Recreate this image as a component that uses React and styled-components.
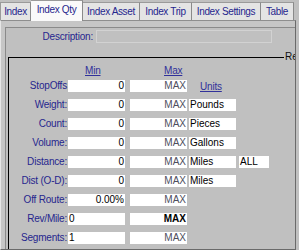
import React from "react";
import styled, { createGlobalStyle } from "styled-components";

const GlobalStyle = createGlobalStyle`
  html, body { margin: 0; padding: 0; background: #c0c0c0; }
  body { font-family: "Liberation Sans", Arial, sans-serif; }
  * { box-sizing: border-box; }
`;

const NAVY = "#26268e";

const Screen = styled.div`
  width: 299px;
  height: 250px;
  overflow: hidden;
  background: #c0c0c0;
  display: flex;
  flex-direction: column;
`;

const TabStrip = styled.div`
  display: flex;
  align-items: flex-end;
  height: 20px;
  flex: none;
`;

const Tab = styled.div`
  width: ${(p) => p.$w}px;
  height: ${(p) => (p.$active ? 21 : 18)}px;
  margin-bottom: ${(p) => (p.$active ? -1 : 0)}px;
  position: relative;
  z-index: ${(p) => (p.$active ? 2 : 1)};
  background: ${(p) => (p.$active ? "#fafafa" : "#e4e4e4")};
  border-top: 1px solid #9a9a9a;
  border-right: 1px solid #8a8a8a;
  border-left: ${(p) => (p.$first ? "1px solid #9a9a9a" : "none")};
  color: ${NAVY};
  font-size: 10px;
  letter-spacing: -0.35px;
  line-height: ${(p) => (p.$active ? 17 : 17)}px;
  text-align: center;
  white-space: nowrap;
`;

const TabPanel = styled.div`
  flex: 1;
  width: 296px;
  display: flex;
  flex-direction: column;
  background: #c6c6c6;
  border-top: 1px solid #8e8e8e;
  border-left: 1px solid #e6e6e6;
  border-right: 1px solid #6a6a6a;
  border-bottom: 1px solid #6a6a6a;
  padding: 6px 0 0 4px;
  min-height: 0;
`;

const Frame = styled.div`
  flex: 1;
  display: flex;
  flex-direction: column;
  background: #c0c0c0;
  border-top: 1px solid #8a8a8a;
  border-left: 1px solid #8a8a8a;
  min-height: 0;
  overflow: hidden;
`;

const DescRow = styled.div`
  display: flex;
  align-items: center;
  height: 13px;
  margin-top: 2px;
  gap: 3px;
`;

const DescLabel = styled.div`
  width: 87px;
  text-align: right;
  color: ${NAVY};
  font-size: 10px;
  letter-spacing: -0.2px;
  line-height: 13px;
`;

const DescField = styled.div`
  width: 176px;
  height: 13px;
  border: 1px solid #d2d2d2;
  background: #c0c0c0;
`;

const GroupRow = styled.div`
  flex: 1;
  display: flex;
  align-items: flex-start;
  margin: 14px 0 0 2px;
  min-height: 0;
`;

const GroupBox = styled.div`
  flex: none;
  width: 276px;
  align-self: stretch;
  border-top: 1px solid #000;
  border-left: 1px solid #000;
  display: flex;
  flex-direction: column;
`;

const Legend = styled.div`
  margin-top: -6px;
  padding-left: 1px;
  font-size: 10px;
  line-height: 12px;
  color: #111;
  white-space: nowrap;
`;

const Grid = styled.div`
  display: grid;
  grid-template-columns: 59px 62px 59px 50px 30px;
  grid-auto-rows: 12px;
  row-gap: 7px;
  align-items: center;
`;

const HeaderGrid = styled(Grid)`
  grid-auto-rows: 11px;
  margin: 7px 0 4px 0;
`;

const Header = styled.div`
  grid-column: ${(p) => p.$col};
  padding-left: ${(p) => p.$pad}px;
  color: #30309a;
  font-size: 10px;
  letter-spacing: -0.2px;
  line-height: 11px;
  text-decoration: underline;
  white-space: nowrap;
`;

const Label = styled.div`
  grid-column: 1;
  text-align: right;
  padding-right: 1px;
  color: ${NAVY};
  font-size: 10px;
  letter-spacing: -0.2px;
  line-height: 12px;
  white-space: nowrap;
`;

const Field = styled.div`
  width: ${(p) => p.$w}px;
  height: 12px;
  background: #fff;
  padding: 0 1px 0 1px;
  font-size: 10px;
  line-height: 12px;
  text-align: ${(p) => p.$align || "left"};
  color: ${(p) => (p.$muted ? "#4e4e5e" : "#000")};
  font-weight: ${(p) => (p.$bold ? 700 : 400)};
  white-space: nowrap;
  overflow: hidden;
`;

const rows = [
  { label: "StopOffs", min: "0", max: "MAX", unitsHeader: true },
  { label: "Weight:", min: "0", max: "MAX", units: "Pounds" },
  { label: "Count:", min: "0", max: "MAX", units: "Pieces" },
  { label: "Volume:", min: "0", max: "MAX", units: "Gallons" },
  { label: "Distance:", min: "0", max: "MAX", units: "Miles", extra: "ALL" },
  { label: "Dist (O-D):", min: "0", max: "MAX", units: "Miles" },
  { label: "Off Route:", min: "0.00%", max: "MAX" },
  { label: "Rev/Mile:", min: "0", max: "MAX", minLeft: true, maxBold: true },
  { label: "Segments:", min: "1", max: "MAX", minLeft: true },
];

const tabs = [
  { t: "Index", w: 31 },
  { t: "Index Qty", w: 52, active: true },
  { t: "Index Asset", w: 57 },
  { t: "Index Trip", w: 52 },
  { t: "Index Settings", w: 69 },
  { t: "Table", w: 33 },
];

export default function App() {
  return (
    <>
      <GlobalStyle />
      <Screen>
        <TabStrip>
          {tabs.map((tab, i) => (
            <Tab key={tab.t} $w={tab.w} $active={tab.active} $first={i === 0}>
              {tab.t}
            </Tab>
          ))}
        </TabStrip>
        <TabPanel>
          <Frame>
            <DescRow>
              <DescLabel>Description:</DescLabel>
              <DescField />
            </DescRow>
            <GroupRow>
              <GroupBox>
                <HeaderGrid>
                  <Header $col={2} $pad={17}>Min</Header>
                  <Header $col={3} $pad={34}>Max</Header>
                </HeaderGrid>
                <Grid>
                  {rows.map((r) => (
                    <React.Fragment key={r.label}>
                      <Label>{r.label}</Label>
                      <Field $w={57} $align={r.minLeft ? "left" : "right"}>
                        {r.min}
                      </Field>
                      <Field
                        $w={57}
                        $align="right"
                        $muted={!r.maxBold}
                        $bold={r.maxBold}
                      >
                        {r.max}
                      </Field>
                      {r.unitsHeader && (
                        <Header $col={4} $pad={11}>Units</Header>
                      )}
                      {r.units && <Field $w={47}>{r.units}</Field>}
                      {r.extra && <Field $w={30}>{r.extra}</Field>}
                    </React.Fragment>
                  ))}
                </Grid>
              </GroupBox>
              <Legend>Revenue</Legend>
            </GroupRow>
          </Frame>
        </TabPanel>
      </Screen>
    </>
  );
}
